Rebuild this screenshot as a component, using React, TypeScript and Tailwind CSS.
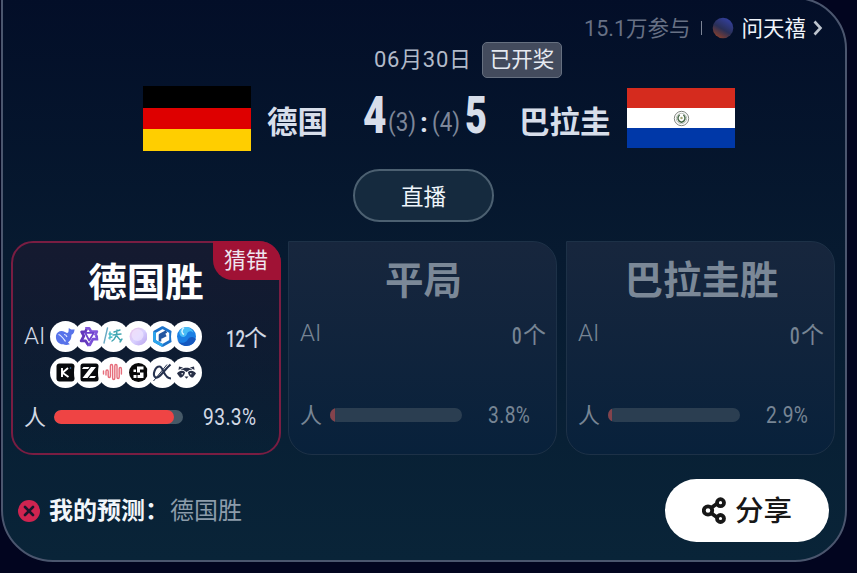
import type { ReactNode } from 'react';
import clsx from 'clsx';

// ==================== TYPES ====================

interface Outcome {
    id: string;
    title: string;
    aiCount: string;
    percent: number;
    wrong?: boolean;
}

// ==================== DATA ====================

const OUTCOMES: Outcome[] = [
    { id: 'home', title: '德国胜', aiCount: '12', percent: 93.3, wrong: true },
    { id: 'draw', title: '平局', aiCount: '0', percent: 3.8 },
    { id: 'away', title: '巴拉圭胜', aiCount: '0', percent: 2.9 }
];

const MODEL_ROWS: ReactNode[][] = [
    [
        <g key="whale">
            <path d="M6 14.500c1-4 5-5.500 9-3.500 2 1 3 1.500 3.500-.5l.3-3.500c1.200 1.200 3 2 5.700 1.200 0 2.800-1 4.600-3 5.600 0 3.600-1.200 6.200-3.500 7.700l1.800 1.700c-3 1.300-5 .8-6.500.1C8.500 23.600 5.300 19.500 6 14.500z" fill="#5873ea" />
            <path d="M8.500 13.500c2.500.5 4.500 3.500 7 7M14 13.500c1.500 0 2.500 1 3 2.500" stroke="#e6ebff" strokeWidth="1.200" fill="none" />
        </g>,
        <g key="star" fill="none" strokeLinejoin="round" transform="translate(1.300 1.500) scale(.9)">
            <path d="M11 6.500h4.500l2 3.500H24l-2 4.500" stroke="#8257dc" strokeWidth="3" />
            <path d="M23 14l2 4.500h-5.500L16 25h-3" stroke="#7a50d8" strokeWidth="3" />
            <path d="M14 24.500 11.500 20.500H6.500L9.500 15 7 10.500h4l1.500-3" stroke="#6439bd" strokeWidth="3" />
            <path d="M11 11.500h9.500l-5 8.500z" stroke="#6f43cd" strokeWidth="2" />
        </g>,
        <g key="script" fill="none" strokeWidth="1.400" strokeLinecap="round">
            <path d="M9.500 7 6 22" stroke="#68a9c4" />
            <path d="M12 11v7M11 13h3M11 17l3-1" stroke="#45bcc9" />
            <path d="M16 11l6-2M15 14l8-1M19 9c0 6-2 9-5 11M18 14l5 6M22 21l2-3" stroke="#41a6b2" />
        </g>,
        <g key="orb">
            <circle cx="15.500" cy="15.500" r="9" fill="url(#orb)" />
            <circle cx="14.500" cy="14" r="6" fill="#f4eaff" opacity=".6" />
        </g>,
        <g key="cube" fill="none" strokeWidth="2.600" strokeLinejoin="round">
            <path d="M15.500 6.500 23.500 11v9l-8 4.500-8-4.500v-9z" stroke="#1c72ca" />
            <path d="M13 20.500V14l6.500-3.500M14 16.500l5-2.500" stroke="#2457a0" />
            <path d="M7.500 11v9l8 4.500" stroke="#2ba6ed" />
        </g>,
        <g key="wave">
            <circle cx="15.500" cy="15.500" r="9.500" fill="#1b7fe4" />
            <path d="M6.500 19c2 4 8 3.500 10 0 1.500-3 5-4.500 8.300-1C24 22 20 25 15.500 25 11 25 7.500 22.500 6.500 19z" fill="#1558bf" />
            <path d="M11 7.300c-3 2-3.500 5.500-1 8 2.500 2 5.500 0 6-2.500.8-3 4.500-3.500 6.500-1-.8-2.500-3-5-6-5.700-1.500-.3-4-.1-5.500 1.200z" fill="#49bdf6" />
            <path d="M13 6.500c-3 2.500-2.500 6 0 7" stroke="#d8f5ff" strokeWidth="1.500" fill="none" />
        </g>
    ],
    [
        <g key="k">
            <rect x="6.500" y="6.500" width="18" height="18" rx="3" fill="#080a0d" />
            <path d="M12 11v9M18 11l-5.500 4.700L18.500 20" stroke="#fff" strokeWidth="1.900" fill="none" />
            <circle cx="20.500" cy="11" r=".8" fill="#3977b8" />
        </g>,
        <g key="z">
            <rect x="6.500" y="6.500" width="18" height="18" rx="2.500" fill="#080a0d" />
            <path d="M9.500 10h6l-1.500 2h-6zM17 10h5l-8.500 11h-5zM16.500 19h5.500L20.500 21H15z" fill="#fff" />
        </g>,
        <g key="pulse">
            <path d="M5.500 17v-3M8 18v-3.500c0-2 2.200-2 2.200 0V19c0 2 2.200 2 2.200 0V9c0-2 2.200-2 2.200 0v12c0 2 2.200 2 2.200 0V9c0-2 2.200-2 2.200 0v11c0 2 2.200 2 2.200 0v-8c0-2 2.200-2 2.200 0v5" fill="none" stroke="#e66d7b" strokeWidth="1.400" strokeLinecap="round" />
        </g>,
        <g key="step">
            <circle cx="15.500" cy="15.500" r="9.500" fill="#090909" />
            <path d="M14 9.500h6.500v3h-3.500v3h-3zM10.500 12.500h2.500V15h-2.500zM10.500 18h3v3h-3zM14.500 18h2.500v-2.500h3.500V21h-6z" fill="#fff" />
        </g>,
        <g key="alpha" fill="none" stroke="#26324f">
            <path d="M23.500 7.500C16 14 12.500 22 8.500 20.500 5 18 8 9.500 12.500 9.500c4 0 4 12 11.500 12" strokeWidth="2.100" />
            <path d="M6.500 24 20 7.500" strokeWidth="1" />
        </g>,
        <g key="panda" fill="#283047">
            <path d="M7.500 13 8 9.500l4 1zM23.500 13l-.5-3.500-4 1z" />
            <path d="M9.500 12.500c4-2.500 8-2.500 12 0l-3 .5-3 2-3-2z" />
            <path d="M6 16.500c2-3 5.500-3.500 8-1.500-.2 3-2.500 6-5 5.500zM25 16.500c-2-3-5.500-3.500-8-1.500.2 3 2.500 6 5 5.500z" />
            <path d="M13.500 19.500h4l-2 2.200z" />
            <circle cx="11.200" cy="16.700" r=".8" fill="#fff" />
            <circle cx="19.800" cy="16.700" r=".8" fill="#fff" />
        </g>
    ]
];

// ==================== COMPONENTS ====================

// Roboto squeezed horizontally, for the scoreboard digits
function Digits({ children, className, box }: { children: ReactNode; className: string; box: string }) {
    return (
        <span className={clsx('block shrink-0 whitespace-nowrap font-[Roboto,sans-serif]', box)}>
            <span className={clsx('inline-block origin-left', className)}>{children}</span>
        </span>
    );
}

function ModelRow({ icons }: { icons: ReactNode[] }) {
    return (
        <div className="flex h-[31px]">
            {icons.map((icon, i) => (
                <span key={i} className="mr-[-6.8px] size-[31px] shrink-0 rounded-full bg-white">
                    <svg viewBox="0 0 31 31" className="size-[31px]">{icon}</svg>
                </span>
            ))}
        </div>
    );
}

function OutcomeCard({ outcome }: { outcome: Outcome }) {
    const { title, aiCount, percent, wrong } = outcome;

    return (
        <div
            className={clsx(
                'relative h-[214px] shrink-0',
                wrong
                    ? '-mr-[2px] w-[270px] rounded-[22px] border-2 border-[#791d42] bg-linear-to-b from-[#151a30] to-[#09203600]'
                    : 'w-[269px] rounded-[24px] rounded-tl-none border border-[#1d3147] bg-linear-to-b from-[#17263d] to-[#08213b]'
            )}
        >
            {wrong && (
                <span className="absolute -top-[2px] -right-[2px] h-[39px] w-[68px] rounded-tr-[22px] rounded-bl-[20px] bg-[#a01235] pr-[2px] text-center text-[22px] leading-[35px] text-[#eee5ef]">
                    猜错
                </span>
            )}
            <div className={clsx('flex h-full flex-col pl-[11px]', wrong ? 'text-[#d1d8e4]' : 'text-[#778594]')}>
                <h2
                    className={clsx(
                        'text-center text-[38.500px] font-bold',
                        wrong ? 'h-[77px] pr-[11px] leading-[72px] text-white' : 'h-[75px] pr-[9px] leading-[70px] text-[#7b8897]'
                    )}
                >
                    {title}
                </h2>
                <div className={clsx('flex', wrong ? 'h-[70px]' : 'h-[71px]')}>
                    <span className="w-[26px] shrink-0 font-[Roboto,sans-serif] text-[24px] leading-[32px] font-light">AI</span>
                    <div className="flex w-[175px] shrink-0 flex-col gap-[5px] pt-px">
                        {wrong && MODEL_ROWS.map((icons, i) => <ModelRow key={i} icons={icons} />)}
                    </div>
                    <div className={clsx('flex shrink-0 justify-end text-[24px] leading-[38px]', wrong ? 'w-[42px]' : 'w-[45px]')}>
                        <Digits box={wrong ? 'w-[18px]' : 'w-[11px]'} className="scale-x-[.7] font-medium">{aiCount}</Digits>
                        <span className="text-[23px] leading-[33px]">个</span>
                    </div>
                </div>
                <div className="mt-[9px] flex h-[36px] items-center">
                    <span className="w-[30px] shrink-0 pb-[3px] text-[22px] leading-[33px]">人</span>
                    <div className={clsx('h-[14px] shrink-0 overflow-hidden rounded-full', wrong ? 'w-[129px] bg-[#465967]' : 'w-[132px] bg-[#2b3e51]')}>
                        <div
                            className={clsx('h-full', wrong ? 'rounded-full bg-[#ef4444]' : 'bg-[#84434c]')}
                            style={{ width: `${percent}%` }}
                        />
                    </div>
                    <Digits box={wrong ? 'ml-[20px] w-[54px]' : 'ml-[26px] w-[44px]'} className="scale-x-[.8] text-[24px] leading-[36px] tracking-[.5px]">
                        {percent}%
                    </Digits>
                </div>
            </div>
        </div>
    );
}

function ShareIcon() {
    return (
        <svg viewBox="0 0 24 27" className="h-[27px] w-[24px]" fill="none" stroke="#171717" strokeWidth="3.800">
            <path d="m9 11 5.500-4M9 16l5.500 4" />
            <circle cx="6" cy="13.500" r="4.200" />
            <circle cx="18.500" cy="5.700" r="3.500" />
            <circle cx="18.500" cy="21.500" r="3.500" />
        </svg>
    );
}

export default function App() {
    return (
        <main className="flex h-[573px] w-[857px] items-start overflow-hidden bg-[#02051f] font-[Noto_Sans_CJK_SC,sans-serif]">
            <svg className="absolute size-0">
                <defs>
                    <linearGradient id="orb" x1="0" y1="0" x2="1" y2="1">
                        <stop stopColor="#edc4e8" />
                        <stop offset=".5" stopColor="#d8d0ff" />
                        <stop offset="1" stopColor="#b8a1eb" />
                    </linearGradient>
                    <linearGradient id="globe" x1=".8" y1="0" x2=".2" y2="1">
                        <stop stopColor="#3441a5" />
                        <stop offset=".55" stopColor="#292f56" />
                        <stop offset="1" stopColor="#914129" />
                    </linearGradient>
                </defs>
            </svg>

            <section className="-mt-[3px] ml-px flex h-[565px] w-[846px] shrink-0 flex-col rounded-[52px] rounded-tl-none border-2 border-[#4b566e] bg-linear-to-b from-[#030e28] via-[#071a30] via-45% to-[#092438]">
                {/* Participants */}
                <div className="flex h-[43px] items-center justify-end pt-[15px] pr-[22px] leading-[28px]">
                    <span className="pt-px font-[Roboto,Noto_Sans_CJK_SC,sans-serif] text-[21.500px] leading-[27px] text-[#687185]">15.1万参与</span>
                    <span className="ml-[11px] h-[14px] w-px bg-[#7c8496]" />
                    <svg viewBox="0 0 22 22" className="ml-[10px] size-[22px]">
                        <circle cx="11" cy="11" r="10.300" fill="url(#globe)" />
                    </svg>
                    <span className="ml-[7px] pb-[2px] text-[21.500px] leading-[26px] text-[#f0f4fb]">问天禧</span>
                    <svg viewBox="0 0 10 16" className="ml-[7px] h-[16px] w-[10px]" fill="none" stroke="#bdc4ce" strokeWidth="2.600">
                        <path d="m1.500 1.500 6 6.500-6 6.500" />
                    </svg>
                </div>

                {/* Date and status */}
                <div className="flex h-[36px] items-center pl-[371px]">
                    <span className="w-[108px] pb-px font-[Roboto,Noto_Sans_CJK_SC,sans-serif] text-[22px] leading-[32px] tracking-[.7px] whitespace-nowrap text-[#b2bac9]">06月30日</span>
                    <span className="h-[36px] w-[80px] rounded-[5px] border border-[#667080] bg-[#434b5d] text-center text-[21.500px] leading-[30px] text-[#e6eaf1]">
                        已开奖
                    </span>
                </div>

                {/* Scoreboard */}
                <div className="flex h-[91px] items-start pt-[8px] pl-[140px] text-[#d7deea]">
                    <div className="h-[65px] w-[108px] shrink-0">
                        <div className="h-[22px] bg-black" />
                        <div className="h-[21px] bg-[#de0000]" />
                        <div className="h-[22px] bg-[#ffce00]" />
                    </div>
                    <span className="ml-[16px] w-[96px] shrink-0 text-[30.500px] leading-[68px] font-bold">德国</span>
                    <Digits box="w-[25px]" className="scale-x-[.78] text-[52px] leading-[60px] font-black">4</Digits>
                    <Digits box="w-[32px]" className="scale-x-[.86] text-[26px] leading-[73px] text-[#7e8799]">(3)</Digits>
                    <Digits box="w-[12px]" className="text-[28px] leading-[73px] font-bold">:</Digits>
                    <Digits box="w-[33px]" className="scale-x-[.86] text-[26px] leading-[73px] text-[#7e8799]">(4)</Digits>
                    <Digits box="w-[22px]" className="scale-x-[.73] text-[52px] leading-[60px] font-black">5</Digits>
                    <span className="ml-[32px] w-[108px] shrink-0 text-[30.500px] leading-[68px] font-bold">巴拉圭</span>
                    <div className="mt-[2px] h-[60px] w-[108px] shrink-0">
                        <div className="h-[20px] bg-[#d52b1e]" />
                        <div className="flex h-[20px] items-center justify-center bg-white">
                            <svg viewBox="0 0 18 18" className="size-[17px]" fill="none">
                                <circle cx="9" cy="9" r="7.600" stroke="#777b75" />
                                <circle cx="9" cy="9" r="5.500" stroke="#9ba49a" strokeWidth=".7" />
                                <path d="M7 5c-3 3-2 7 2 8 4-1 5-5 2-8" stroke="#466848" strokeWidth="1.500" />
                                <circle cx="9" cy="8.500" r="1.300" fill="#a4a777" />
                            </svg>
                        </div>
                        <div className="h-[20px] bg-[#0038a8]" />
                    </div>
                </div>

                <button className="ml-[350px] h-[53px] w-[141px] shrink-0 rounded-full border-2 border-[#4c6071] bg-[#152a3e] pb-px text-[22.500px] leading-[48px] text-[#eef5fa]">
                    直播
                </button>

                {/* Outcomes */}
                <div className="mt-[19px] flex gap-[9px] pl-[8px]">
                    {OUTCOMES.map(outcome => (
                        <OutcomeCard key={outcome.id} outcome={outcome} />
                    ))}
                </div>

                {/* My prediction */}
                <div className="mt-[24px] flex h-[63px] items-center pl-[15px]">
                    <svg viewBox="0 0 22 22" className="size-[22px]">
                        <circle cx="11" cy="11" r="11" fill="#cf2450" />
                        <path d="m7 7 8 8M15 7l-8 8" stroke="#18162c" strokeWidth="2.600" strokeLinecap="round" />
                    </svg>
                    <span className="ml-[9px] w-[121px] pb-[3px] text-[24px] leading-[34px] whitespace-nowrap font-bold text-[#f1f6fa]">我的预测：</span>
                    <span className="pb-[3px] text-[24px] leading-[34px] text-[#8c9caa]">德国胜</span>
                    <button className="mr-[16px] ml-auto flex h-[63px] w-[164px] items-center justify-center gap-[9px] rounded-full bg-white text-[28.500px] font-medium text-[#171717]">
                        <ShareIcon />
                        <span className="pb-[3px] leading-[38px]">分享</span>
                    </button>
                </div>
            </section>
        </main>
    );
}
